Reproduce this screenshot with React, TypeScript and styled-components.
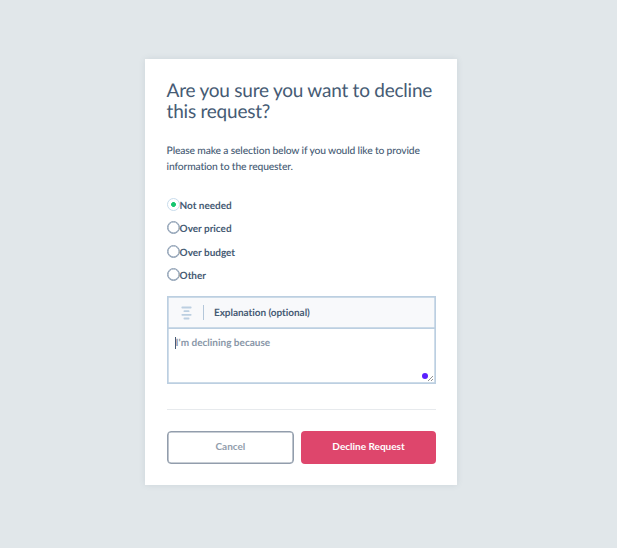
import React, { useState } from 'react';
import styled, { createGlobalStyle } from 'styled-components';

const GlobalStyle = createGlobalStyle`
  * { box-sizing: border-box; }
  body {
    margin: 0;
    background: #e1e7ea;
    font-family: Lato, 'Open Sans', sans-serif;
    font-variant-ligatures: none;
    text-rendering: geometricPrecision;
    color: #465b74;
    overflow: hidden;
  }
`;

const Page = styled.main`
  display: flex;
  justify-content: center;
  align-items: flex-start;
  width: 617px;
  height: 548px;
  padding: 58.5px 14.6px 0 0;
`;

const Dialog = styled.form`
  width: 312px;
  height: 426.5px;
  padding: 21px 21.2px 0 21.4px;
  background: #fff;
  box-shadow: 0 0 6px rgba(70, 91, 116, 0.13);
`;

const Title = styled.h1`
  margin: 0;
  font-size: 19px;
  line-height: 21.3px;
  font-weight: 400;
  letter-spacing: -0.23px;
  white-space: nowrap;
`;

const Copy = styled.p`
  margin: 22.4px 0 0;
  font-size: 10.3px;
  line-height: 15.7px;
  font-weight: 500;
  letter-spacing: -0.15px;
  white-space: nowrap;
`;

const Options = styled.div`
  display: grid;
  grid-auto-rows: 23.3px;
  margin-top: 18.5px;
`;

const Option = styled.label`
  display: flex;
  align-items: center;
  font-size: 10px;
  font-weight: 700;
  letter-spacing: -0.02px;
  cursor: pointer;
`;

const Radio = styled.input`
  appearance: none;
  flex: none;
  width: 13px;
  height: 13px;
  margin: 0 0 3px;
  border: 1px solid #8b9db2;
  border-radius: 50%;
  box-shadow: inset 0 0 0 0.5px #8b9db2;
  &:checked {
    border: 1px solid #c8dcec;
    background: radial-gradient(circle, #16c56e 2.1px, transparent 2.7px);
    box-shadow: none;
  }
`;

const Field = styled.div`
  position: relative;
  height: 88px;
  margin-top: 8.6px;
  border: 1px solid #bccfe1;
  box-shadow: inset 0 0 0 0.7px #bccfe1;
`;

const FieldHead = styled.div`
  display: flex;
  align-items: center;
  height: 32px;
  padding-left: 13px;
  background: #f8f9fb;
  border-bottom: 1px solid #bccfe1;
  box-shadow: inset 0 0 0 0.7px #bccfe1;
`;

const Divider = styled.span`
  width: 1.4px;
  height: 15px;
  margin: 0 10px 0 11px;
  background: #b4c7da;
`;

const FieldLabel = styled.span`
  font-size: 10px;
  font-weight: 700;
  letter-spacing: -0.04px;
`;

const Entry = styled.div`
  display: flex;
  align-items: center;
  height: 28px;
  padding-left: 7px;
  color: #8997a8;
  font-size: 10px;
  font-weight: 700;
`;

const Caret = styled.span`
  width: 1px;
  height: 12px;
  background: #465b74;
`;

const Dot = styled.span`
  position: absolute;
  right: 7px;
  bottom: 4px;
  width: 6px;
  height: 6px;
  border-radius: 50%;
  background: #5a20ff;
`;

const Grip = styled.svg`
  position: absolute;
  right: 1px;
  bottom: 1px;
`;

const Rule = styled.hr`
  height: 1px;
  margin: 24.5px 0 21.6px;
  border: 0;
  background: #e7eaed;
`;

const Actions = styled.div`
  display: grid;
  grid-template-columns: 127.6px 135px;
  justify-content: space-between;
  height: 33px;
`;

const Button = styled.button<{ $primary?: boolean }>`
  padding: 0 0 3px;
  border: ${p => (p.$primary ? '0' : '1px solid #929dac')};
  box-shadow: ${p => (p.$primary ? 'none' : 'inset 0 0 0 0.6px #929dac')};
  border-radius: 4px;
  background: ${p => (p.$primary ? '#de466c' : '#fff')};
  color: ${p => (p.$primary ? '#fff' : '#929dac')};
  font: 700 10px Lato, sans-serif;
`;

const reasons = ['Not needed', 'Over priced', 'Over budget', 'Other'];

export default function App() {
  const [reason, setReason] = useState(reasons[0]);
  return (
    <>
      <GlobalStyle />
      <Page>
        <Dialog>
          <Title>Are you sure you want to decline<br />this request?</Title>
          <Copy>Please make a selection below if you would like to provide<br />information to the requester.</Copy>
          <Options>
            {reasons.map(item => (
              <Option key={item}>
                <Radio type="radio" name="reason" checked={reason === item} onChange={() => setReason(item)} />
                {item}
              </Option>
            ))}
          </Options>
          <Field>
            <FieldHead>
              <svg width="11" height="14" viewBox="0 0 11 14" stroke="#bccfe1" strokeWidth="1.8" strokeLinecap="round">
                <path d="M1.3 1.5h8.4M3.4 5.2h4.2M1.3 8.8h8.4M3.4 12.5h4.2" />
              </svg>
              <Divider />
              <FieldLabel>Explanation (optional)</FieldLabel>
            </FieldHead>
            <Entry><Caret />I'm declining because</Entry>
            <Dot />
            <Grip width="7" height="7" viewBox="0 0 7 7" stroke="#777" strokeWidth=".8">
              <path d="M1 6 6 1M4 6l2-2" />
            </Grip>
          </Field>
          <Rule />
          <Actions>
            <Button type="button">Cancel</Button>
            <Button type="button" $primary>Decline Request</Button>
          </Actions>
        </Dialog>
      </Page>
    </>
  );
}
